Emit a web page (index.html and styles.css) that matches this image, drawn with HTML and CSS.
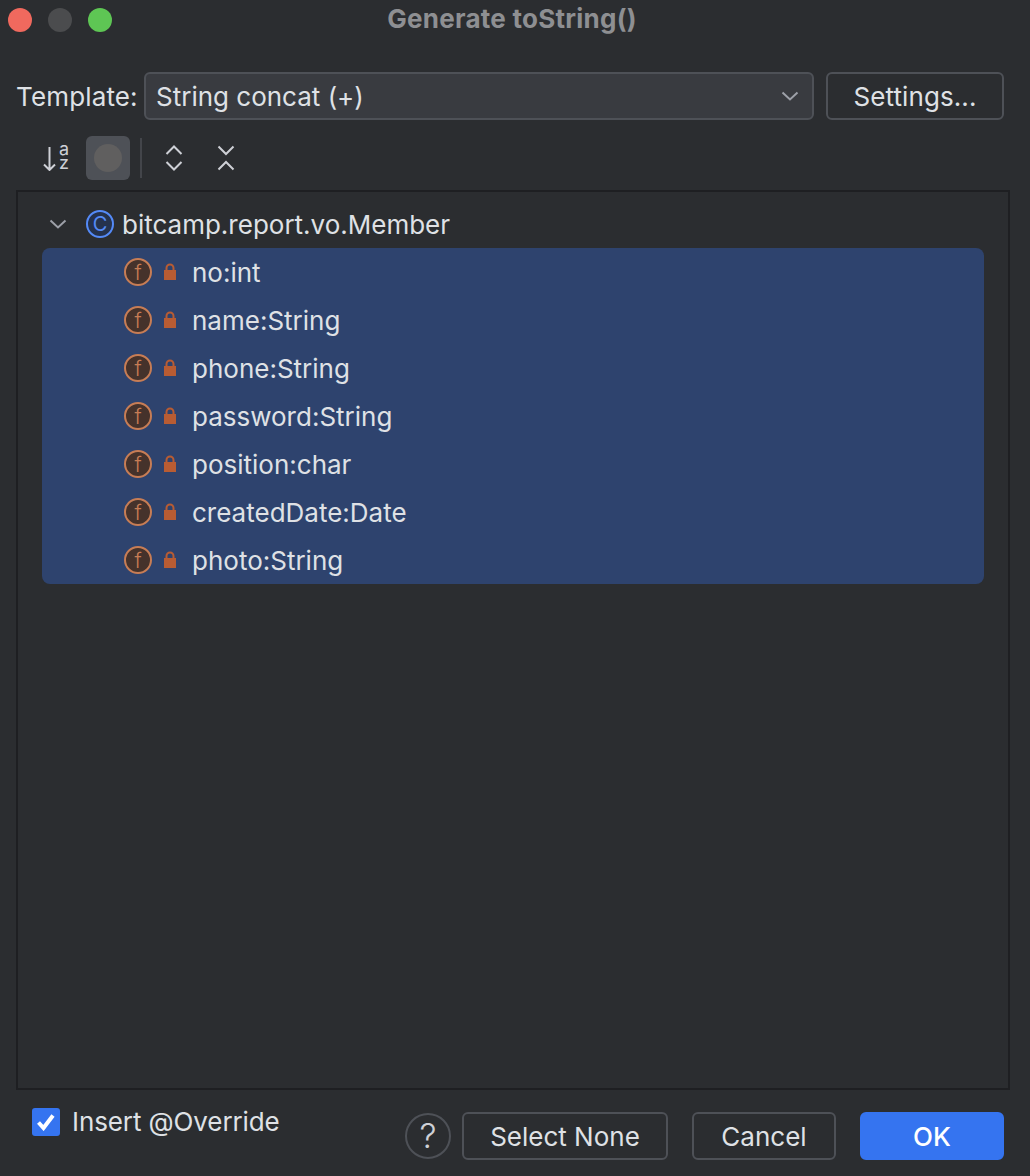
FILE: index.html
```html
<!DOCTYPE html>
<html lang="en">
<head>
    <meta charset="UTF-8">
    <title>Generate toString()</title>
    <link rel="stylesheet" href="styles.css">
</head>
<body>
    <div class="dialog">
        <header class="titlebar">
            <div class="lights">
                <span class="light red"></span>
                <span class="light grey"></span>
                <span class="light green"></span>
            </div>
            <h1>Generate toString()</h1>
        </header>

        <div class="template-row">
            <label class="template-label">Template:</label>
            <div class="combo">
                <span>String concat (+)</span>
                <svg class="combo-arrow" width="18" height="10" viewBox="0 0 18 10"><path d="M1.500 1.500 9 8.500l7.500-7"/></svg>
            </div>
            <button class="btn settings">Settings...</button>
        </div>

        <div class="toolbar">
            <div class="tool sort">
                <svg width="13" height="26" viewBox="0 0 13 26">
                    <path class="stroke" d="M6.500 2v23M1 19.500 6.500 25 12 19.500"/>
                </svg>
                <div class="az">
                    <span>a</span>
                    <span>z</span>
                </div>
            </div>
            <div class="tool active"><span class="dot"></span></div>
            <span class="tool-sep"></span>
            <div class="tool">
                <svg width="18" height="26" viewBox="0 0 18 26"><path class="stroke" d="M1.500 9 9 1.500 16.500 9M1.500 17 9 24.500 16.500 17"/></svg>
            </div>
            <div class="tool">
                <svg width="18" height="26" viewBox="0 0 18 26"><path class="stroke" d="M1.500 1.500 9 9 16.500 1.500M1.500 24.500 9 17 16.500 24.500"/></svg>
            </div>
        </div>

        <div class="tree">
            <div class="tree-root">
                <svg class="expander" width="18" height="10" viewBox="0 0 18 10"><path d="M1.500 1.500 9 8.500l7.500-7"/></svg>
                <span class="class-icon">C</span>
                <span>bitcamp.report.vo.Member</span>
            </div>
            <ul class="members" id="members"></ul>
        </div>

        <footer class="footer">
            <label class="check">
                <span class="checkbox">
                    <svg width="20" height="18" viewBox="0 0 20 18"><path d="M2.500 9.500 7.500 15 17 2.500"/></svg>
                </span>
                Insert @Override
            </label>
            <div class="actions">
                <span class="help">?</span>
                <button class="btn select-none">Select None</button>
                <button class="btn cancel">Cancel</button>
                <button class="btn primary">OK</button>
            </div>
        </footer>
    </div>

    <script>
        const fields = ['no:int', 'name:String', 'phone:String', 'password:String', 'position:char', 'createdDate:Date', 'photo:String'];
        const list = document.getElementById('members');
        fields.forEach(field => {
            const row = document.createElement('li');
            row.className = 'member';
            row.innerHTML = `
                <span class="field-icon">f</span>
                <svg class="lock" width="14" height="18" viewBox="0 0 14 18">
                    <path class="shackle" d="M3.500 8V5a3.500 3.500 0 0 1 7 0v3"/>
                    <rect x="1" y="7" width="12" height="10"/>
                </svg>
                <span>${field}</span>`;
            list.appendChild(row);
        });
    </script>
</body>
</html>
```

FILE: styles.css
```css
* { box-sizing: border-box; margin: 0; padding: 0; }
body { background-color: #2b2d30; color: #dfe1e5; font-family: Inter, 'Noto Sans', sans-serif; font-size: 26px; }
.dialog { width: 1030px; height: 1176px; display: flex; flex-direction: column; }

.titlebar { height: 40px; display: grid; grid-template-columns: 1fr auto 1fr; align-items: center; padding-left: 8px; }
.lights { display: flex; gap: 16px; }
.light { width: 24px; height: 24px; border-radius: 50%; }
.light.red { background-color: #f0695e; }
.light.grey { background-color: #4b4c4e; }
.light.green { background-color: #5ec654; }
.titlebar h1 { grid-column: 2; font-size: 26px; font-weight: 700; letter-spacing: 0.25px; color: #8e8f92; margin-left: -14px; margin-top: -3px; }

.template-row { display: flex; align-items: center; margin-top: 32px; padding-left: 16px; height: 48px; }
.template-label { width: 128px; letter-spacing: 0.15px; }
.combo {
    width: 670px; height: 48px; display: flex; align-items: center; justify-content: space-between;
    background-color: #393b40; border: 2px solid #4e5157; border-radius: 6px; padding: 0 13px 0 10px;
}
.combo-arrow path, .expander path { fill: none; stroke: #9da0a8; stroke-width: 2; }

.btn {
    height: 48px; font-family: inherit; font-size: 26px; color: #dfe1e5; background-color: #2b2d30;
    border: 2px solid #4e5157; border-radius: 6px;
}
.settings { width: 178px; margin-left: 12px; letter-spacing: 0.1px; }

.toolbar { display: flex; align-items: center; height: 44px; margin-top: 16px; padding-left: 34px; }
.tool { width: 44px; height: 44px; display: flex; align-items: center; justify-content: center; flex-shrink: 0; }
.tool.sort { justify-content: flex-start; padding-left: 9px; gap: 3px; }
.tool.active { background-color: #4e5157; border-radius: 6px; margin-left: 8px; }
.dot { width: 28px; height: 28px; border-radius: 50%; background-color: #605f5f; }
.tool-sep { width: 2px; height: 40px; background-color: #43454a; margin: 0 10px; }
.tool + .tool:last-child { margin-left: 8px; }
.stroke { fill: none; stroke: #ced0d6; stroke-width: 2; }
.az { display: flex; flex-direction: column; align-items: center; font-size: 18px; line-height: 14px; color: #ced0d6; margin-bottom: 4px; }
.az span { height: 14px; }

.tree { width: 994px; height: 900px; margin: 10px 0 0 16px; border: 2px solid #1e1f22; padding: 8px 24px 0; }
.tree-root { height: 48px; display: flex; align-items: center; }
.expander { margin: 0 19px 0 7px; }
.class-icon {
    width: 28px; height: 28px; border: 2px solid #548af7; border-radius: 50%; color: #548af7; background-color: #25324d;
    display: flex; align-items: center; justify-content: center; font-size: 20px; margin-right: 8px;
}
.members { list-style: none; width: 942px; background-color: #2e436e; border-radius: 8px; }
.member { height: 48px; display: flex; align-items: center; padding-left: 82px; }
.field-icon {
    width: 28px; height: 28px; border: 2px solid #c77d55; border-radius: 50%; background-color: #45322b; color: #c77d55;
    display: flex; align-items: center; justify-content: center; font-size: 21px; font-weight: 300; margin-right: 11px;
}
.lock { margin-right: 15px; }
.lock rect { fill: #b85c33; }
.lock .shackle { fill: none; stroke: #b85c33; stroke-width: 2; }

.footer { flex: 1; display: flex; justify-content: space-between; padding: 18px 26px 0 32px; }
.check { display: flex; align-items: flex-start; gap: 12px; line-height: 28px; letter-spacing: -0.1px; }
.checkbox { width: 28px; height: 28px; background-color: #3574f0; border-radius: 3px; display: flex; align-items: center; justify-content: center; }
.checkbox path { fill: none; stroke: #fff; stroke-width: 4; }
.actions { display: flex; align-items: center; height: 48px; margin-top: 4px; }
.help {
    width: 46px; height: 46px; border: 2px solid #4e5157; border-radius: 50%; display: flex; align-items: center;
    justify-content: center; font-size: 34px; line-height: 1; font-weight: 300; color: #ced0d6; margin-right: 11px;
}
.select-none { width: 206px; margin-right: 24px; }
.cancel { width: 144px; margin-right: 24px; }
.primary { width: 144px; background-color: #3574f0; border-color: #3574f0; color: #fff; font-weight: 500; }
```
